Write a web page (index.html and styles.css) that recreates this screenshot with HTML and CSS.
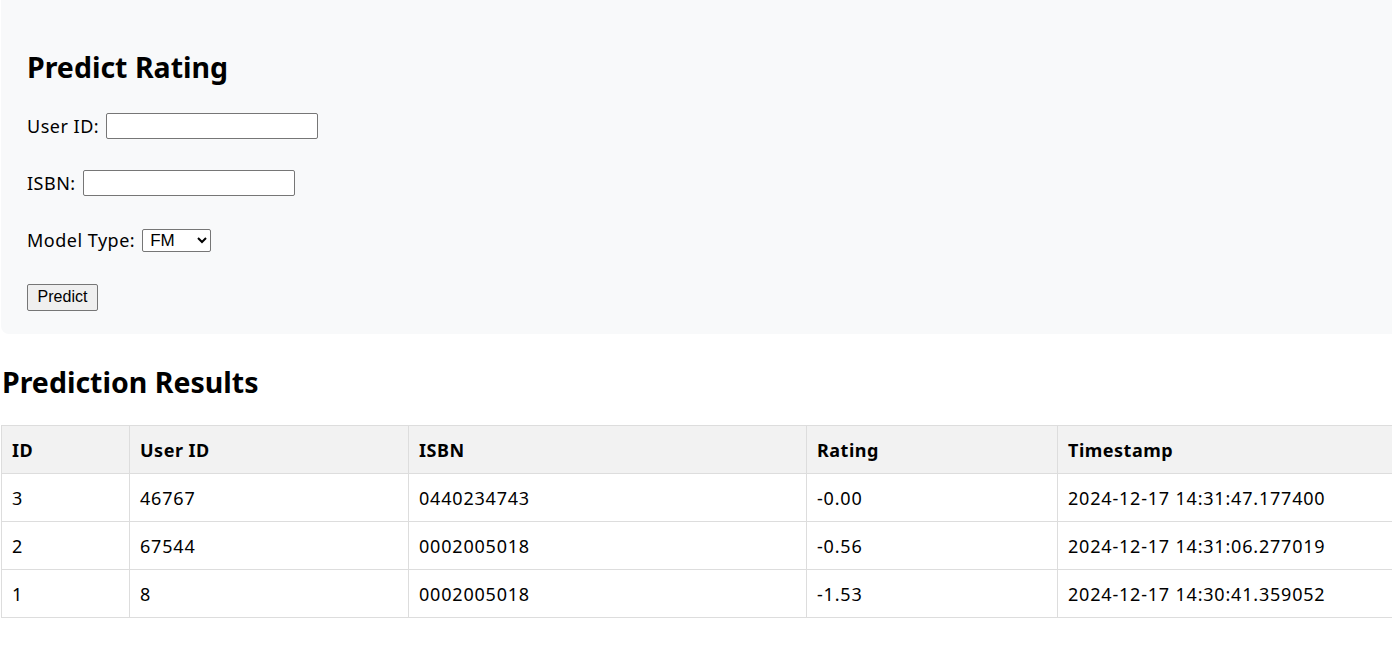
FILE: index.html
```html
<!DOCTYPE html>
<html lang="en">
<head>
<meta charset="utf-8">
<title>Predict Rating</title>
<link rel="stylesheet" href="styles.css">
</head>
<body>
<section class="panel">
  <h2 class="title">Predict Rating</h2>
  <form class="form">
    <p class="row"><label>User ID:</label> <input class="field" type="text"></p>
    <p class="row"><label>ISBN:</label> <input class="field" type="text"></p>
    <p class="row"><label>Model Type:</label> <select class="select"><option>FM</option></select></p>
    <p class="row"><button class="btn" type="button">Predict</button></p>
  </form>
</section>
<h2 class="results-title">Prediction Results</h2>
<table class="results">
  <thead>
    <tr><th class="c1">ID</th><th class="c2">User ID</th><th class="c3">ISBN</th><th class="c4">Rating</th><th class="c5">Timestamp</th></tr>
  </thead>
  <tbody>
    <tr><td>3</td><td>46767</td><td>0440234743</td><td>-0.00</td><td>2024-12-17 14:31:47.177400</td></tr>
    <tr><td>2</td><td>67544</td><td>0002005018</td><td>-0.56</td><td>2024-12-17 14:31:06.277019</td></tr>
    <tr><td>1</td><td>8</td><td>0002005018</td><td>-1.53</td><td>2024-12-17 14:30:41.359052</td></tr>
  </tbody>
</table>
</body>
</html>
```
FILE: styles.css
```css
html, body {
  margin: 0;
  padding: 0;
  background: #fff;
  overflow-x: hidden;
}
body {
  padding-left: 1px;
  font-family: "Noto Sans", "Open Sans", sans-serif;
  font-size: 18px;
  color: #000;
}
.panel {
  background: #f8f9fa;
  border-radius: 0 0 8px 8px;
  padding: 47px 26px 18px;
  width: 1420px;
}
.title {
  margin: 0;
  font-size: 28.5px;
  line-height: 40px;
  font-weight: 700;
}
.form { margin: 0; }
.row {
  margin: 19px 0 0;
  height: 38px;
  display: flex;
  align-items: center;
  gap: 7px;
  line-height: 24px;
}
.row:first-child { margin-top: 20px; }
.row label {
  display: inline-block;
  letter-spacing: 0.5px;
}
.field {
  width: 212px;
  height: 26px;
  box-sizing: border-box;
  border: 1px solid #767676;
  border-radius: 2px;
  background: #fff;
  padding: 1px 2px;
}
.select {
  width: 69px;
  height: 23px;
  box-sizing: border-box;
  border: 1px solid #767676;
  border-radius: 2px;
  background: #fff;
  font-family: "Liberation Sans", Arial, sans-serif;
  font-size: 17px;
  color: #000;
  padding: 0 3px;
}
.btn {
  width: 71px;
  height: 27px;
  box-sizing: border-box;
  border: 1px solid #767676;
  border-radius: 2px;
  background: #efefef;
  font-family: "Liberation Sans", Arial, sans-serif;
  font-size: 16px;
  color: #000;
  padding: 0;
}
.results-title {
  margin: 28px 0 23px 1px;
  font-size: 28.5px;
  line-height: 40px;
  font-weight: 700;
}
.results {
  border-collapse: collapse;
  table-layout: fixed;
  width: 1420px;
}
.results th, .results td {
  border: 1px solid #ddd;
  height: 48px;
  box-sizing: border-box;
  padding: 0 10px;
  text-align: left;
  font-size: 18px;
}
.results td { letter-spacing: 0.8px; }
.results th {
  background: #f2f2f2;
  font-weight: 700;
  letter-spacing: 0.5px;
}
.c1 { width: 128px; }
.c2 { width: 279px; }
.c3 { width: 398px; }
.c4 { width: 251px; }
```
